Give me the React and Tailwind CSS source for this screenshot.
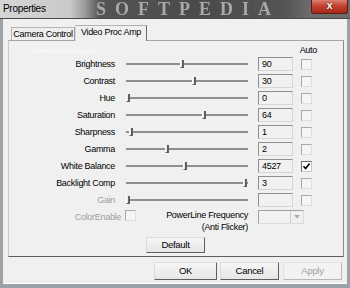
import React from "react";

const rows = [
  { label: "Brightness", pos: 56, value: "90" },
  { label: "Contrast", pos: 68, value: "30" },
  { label: "Hue", pos: 2, value: "0" },
  { label: "Saturation", pos: 78, value: "64" },
  { label: "Sharpness", pos: 5, value: "1" },
  { label: "Gamma", pos: 41, value: "2" },
  { label: "White Balance", pos: 59, value: "4527", checked: true },
  { label: "Backlight Comp", pos: 119, value: "3" },
  { label: "Gain", pos: 2, value: "", disabled: true },
];

function Checkbox({ checked }) {
  if (checked) {
    return (
      <div className="w-[11px] h-[11px] border border-t-[#6a6a6a] border-l-[#6a6a6a] border-r-[#c8c8c8] border-b-[#c8c8c8] bg-white flex items-center justify-center">
        <svg width="9" height="9" viewBox="0 0 9 9">
          <path d="M1.5 4.2 L3.6 6.6 L7.6 1.6" stroke="#000" strokeWidth="1.6" fill="none" />
        </svg>
      </div>
    );
  }
  return (
    <div className="w-[11px] h-[11px] border border-t-[#a8a8a8] border-l-[#a8a8a8] border-r-[#dedede] border-b-[#dedede] bg-[#f5f5f5]" />
  );
}

function Slider({ pos }) {
  return (
    <div className="relative w-[122px] h-[14px] flex items-center ml-[11px]">
      <div className="w-full h-[2px] bg-[#8f8f8f]" />
      <div
        className="absolute top-[3px] w-[4px] h-[8px] bg-[#e6e6e6] border-l border-l-white border-r-2 border-r-[#5f5f5f] border-b border-b-[#5f5f5f]"
        style={{ left: pos - 2 }}
      />
    </div>
  );
}

function NumBox({ value }) {
  return (
    <div className="ml-[10px] w-[35px] h-[14px] border border-t-[#8f8f8f] border-l-[#8f8f8f] border-r-[#d6d6d6] border-b-[#d6d6d6] bg-[#f1f1f1] flex items-center pl-[3px] text-[9px] leading-[12px] text-black">
      {value}
    </div>
  );
}

function Btn({ children, w, disabled, className = "" }) {
  return (
    <div
      className={
        "h-[18px] flex items-center justify-center text-[9.5px] leading-[12px] rounded-[1px] border " +
        (disabled
          ? "border-t-[#e2e2e2] border-l-[#e2e2e2] border-r-[#b8b8b8] border-b-[#b8b8b8] bg-[#f2f2f2] text-[#a3a3a3] "
          : "border-t-[#dcdcdc] border-l-[#dcdcdc] border-r-[#5e5e5e] border-b-[#5e5e5e] bg-[linear-gradient(#f6f6f6,#e6e6e6)] text-black ") +
        w +
        " " +
        className
      }
    >
      {children}
    </div>
  );
}

export default function App() {
  return (
    <div className="w-[350px] h-[288px] overflow-hidden flex flex-col bg-[#9aa2a8] font-['Liberation_Sans',Arial,sans-serif] tracking-[-0.3px] select-none">
      {/* Title bar */}
      <div className="relative h-[19px] shrink-0 bg-[linear-gradient(to_right,#d5d5d5_0px,#cacaca_70px,#9a9a9a_85px,#545454_100px,#4a4a4a_200px,#555555_285px,#6c6c6c_310px)] flex items-center border-b border-[#4a4a4a]">
        <div className="absolute left-[96px] top-0 font-['Liberation_Serif',serif] font-bold text-[18px] leading-[18px] tracking-[9px] text-[#a8a8a8] blur-[0.6px]">
          SOFTPEDIA
        </div>
        <span className="relative pl-[3px] text-[10px] leading-[12px] text-black">Properties</span>
        <div className="absolute left-[311px] top-0 w-[37px] h-[14px] rounded-b-[3px] border border-t-0 border-[#5b1c12] bg-[linear-gradient(#dc8273,#c4402f_45%,#a8281a)] flex items-center justify-center">
          <span className="font-['Liberation_Sans',Arial,sans-serif] font-bold text-[11px] leading-[11px] text-white [text-shadow:0_0_1px_#3a0a04,0_0_1px_#3a0a04] -mt-[2px]">x</span>
        </div>
      </div>

      {/* Client area */}
      <div className="mx-[3px] h-[265px] shrink-0 bg-[#f0f0f0] border-b border-b-white flex flex-col">
        {/* Tabs */}
        <div className="relative flex items-end ml-[5px] mt-[6px] h-[15px]">
          <div className="ml-[3px] w-[64px] h-[13px] border border-b-0 border-t-[#b5b5b5] border-l-[#b5b5b5] border-r-[#9a9a9a] bg-[#eeeeee] flex items-center justify-center text-[9px] leading-[11px] text-black">
            Camera Control
          </div>
          <div className="relative z-10 w-[72px] h-[16px] -mb-[1px] border border-b-0 border-t-[#b0b0b0] border-l-[#d8d8d8] border-r-[#6f6f6f] bg-[#f0f0f0] flex items-start justify-center pt-[1px] text-[9px] leading-[11px] text-black">
            Video Proc Amp
          </div>
        </div>

        {/* Panel */}
        <div className="ml-[5px] w-[336px] h-[217px] border border-t-[#a5a5a5] border-l-[#c8c8c8] border-r-[#8a8a8a] border-b-[#5e5e5e] flex flex-col">
          <div className="mt-[3px] h-[13px] flex items-center justify-between">
            <span className="ml-[25px] text-[8px] leading-[10px] text-[#fafafa]">www.softpedia.com</span>
            <span className="mr-[26px] text-[9px] leading-[11px] text-black">Auto</span>
          </div>
          {rows.map((r) => (
            <div key={r.label} className="h-[17px] flex items-start">
              <div className="h-[14px] flex items-center">
                <div
                  className={
                    "w-[106px] text-right text-[9px] leading-[11px] " +
                    (r.disabled ? "text-[#a0a0a0]" : "text-black")
                  }
                >
                  {r.label}
                </div>
                <Slider pos={r.pos} />
                <NumBox value={r.value} />
                <div className="ml-[8px]">
                  <Checkbox checked={r.checked} />
                </div>
              </div>
            </div>
          ))}
          <div className="h-[27px] flex items-start">
            <div className="h-[14px] flex items-center">
              <div className="w-[112px] text-right text-[9px] leading-[11px] text-[#a0a0a0]">ColorEnable</div>
              <div className="ml-[4px] -mt-[3px]">
                <Checkbox />
              </div>
            </div>
            <div className="w-[112px] -mt-[1px] text-right text-[9px] leading-[12px] text-black">
              <div>PowerLine Frequency</div>
              <div>(Anti Flicker)</div>
            </div>
            <div className="ml-[10px] w-[46px] h-[14px] border border-t-[#a0a0a0] border-l-[#a0a0a0] border-r-[#dcdcdc] border-b-[#dcdcdc] bg-[#f2f2f2] flex justify-end">
              <div className="w-[13px] h-full border-l border-[#d0d0d0] bg-[#f0f0f0] flex items-center justify-center">
                <svg width="6" height="4" viewBox="0 0 6 4">
                  <path d="M0 0 L6 0 L3 3.5 Z" fill="#a8a8a8" />
                </svg>
              </div>
            </div>
          </div>
          <div className="flex">
            <Btn w="w-[59px]" className="ml-[137px] !h-[16px]">Default</Btn>
          </div>
        </div>

        {/* Buttons */}
        <div className="mt-[5px] flex justify-end pr-[5px]">
          <Btn w="w-[63px]" className="mr-[3px]">OK</Btn>
          <Btn w="w-[59px]" className="mr-[4px]">Cancel</Btn>
          <Btn w="w-[59px]" disabled>Apply</Btn>
        </div>
      </div>
    </div>
  );
}
